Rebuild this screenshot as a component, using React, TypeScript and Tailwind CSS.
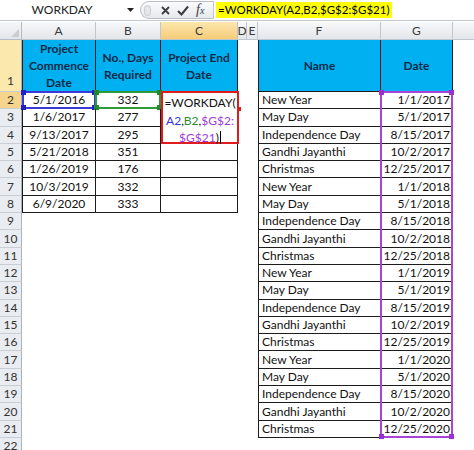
import React from 'react';

const projects = [
  ['5/1/2016', '332'],
  ['1/6/2017', '277'],
  ['9/13/2017', '295'],
  ['5/21/2018', '351'],
  ['1/26/2019', '176'],
  ['10/3/2019', '332'],
  ['6/9/2020', '333'],
];

const names = ['New Year', 'May Day', 'Independence Day', 'Gandhi Jayanthi', 'Christmas'];
const days = ['1/1', '5/1', '8/15', '10/2', '12/25'];
const holidays = [2017, 2018, 2019, 2020].flatMap((y) => names.map((n, i) => [n, `${days[i]}/${y}`]));

const line = 'border-[#1c1c1c]';

// little squares on the corners of a reference range
const Handles = ({ tone }: { tone: string }) => (
  <>
    <span className={`absolute -left-[3px] -top-[3px] h-[5px] w-[5px] ${tone}`} />
    <span className={`absolute -right-[3px] -top-[3px] h-[5px] w-[5px] ${tone}`} />
    <span className={`absolute -bottom-[3px] -left-[3px] h-[5px] w-[5px] ${tone}`} />
    <span className={`absolute -bottom-[3px] -right-[3px] h-[5px] w-[5px] ${tone}`} />
  </>
);

const RowHead = ({ n, tone = 'bg-[#e9ecf0]', bottom = false }: { n: number; tone?: string; bottom?: boolean }) => (
  <div
    className={`flex w-[22px] shrink-0 justify-center border-r border-b border-r-[#aab2bc] border-b-[#c9ced5] text-[12px] text-[#333] ${tone} ${
      bottom ? 'items-end pb-[1px]' : 'items-center'
    }`}
  >
    {n}
  </div>
);

const Hdr = ({ w, children }: { w: string; children: React.ReactNode }) => (
  <div
    className={`flex ${w} shrink-0 items-center justify-center border-r border-b ${line} bg-[#00b0f0] text-center text-[12px] leading-[17px] font-bold text-[#0e2a47]`}
  >
    <div>{children}</div>
  </div>
);

function FormulaBar() {
  return (
    <div className="flex h-[21px] border-b border-[#c3c8ce] bg-white">
      <div className="flex w-[139px] shrink-0 items-center">
        <span className="w-[124px] text-center text-[12px] text-[#222]">WORKDAY</span>
        <svg className="ml-[3px] h-[4px] w-[7px]" viewBox="0 0 7 4">
          <path d="M0 0h7L3.5 4z" fill="#222" />
        </svg>
      </div>
      <div className="mt-[1px] mb-[1px] ml-px flex w-[74px] shrink-0 items-center rounded-l-full border border-r-[#c3c8ce] border-[#b9bec5] bg-gradient-to-b from-[#fafbfc] to-[#e6e9ed]">
        <span className="ml-[3px] h-[11px] w-[7px] rounded-full border border-[#c6cace] bg-[#e4e7ea]" />
        <svg className="ml-[10px] h-[9px] w-[9px]" viewBox="0 0 9 9">
          <path d="M1 1L8 8M8 1L1 8" stroke="#3c3c3c" strokeWidth="1.8" fill="none" />
        </svg>
        <svg className="ml-[7px] h-[11px] w-[12px]" viewBox="0 0 12 11">
          <path d="M1 6L4.5 9.5L11 1.5" stroke="#3c3c3c" strokeWidth="2" fill="none" />
        </svg>
        <span className="ml-[7px] font-['Liberation_Serif',serif] text-[14px] leading-none text-[#3c3c3c] italic">
          f<span className="text-[10px]">x</span>
        </span>
      </div>
      <div className="flex flex-1 items-start">
        <span className="mt-[2px] ml-[2px] h-[16px] bg-[#ffff00] pr-[3px] pl-[2px] text-[11.5px] leading-[16px] whitespace-nowrap text-black">
          =WORKDAY(A2,B2,$G$2:$G$21)
        </span>
      </div>
    </div>
  );
}

function ColumnHeads() {
  const cols = [
    ['A', 'w-[74px]'],
    ['B', 'w-[65px]'],
    ['C', 'w-[77px]'],
    ['D', 'w-[9px]'],
    ['E', 'w-[11px]'],
    ['F', 'w-[123px]'],
    ['G', 'w-[72px]'],
  ];
  return (
    <div className="mt-px flex h-[18px]">
      <div className="relative w-[22px] shrink-0 border-r border-b border-[#b5bcc5] bg-gradient-to-b from-[#f5f6f8] to-[#e3e6ea]">
        <svg className="absolute right-[2px] bottom-[2px] h-[8px] w-[8px]" viewBox="0 0 8 8">
          <path d="M8 0V8H0z" fill="#c9cdd2" />
        </svg>
      </div>
      {cols.map(([c, w]) => (
        <div
          key={c}
          className={`flex ${w} shrink-0 items-center justify-center border-r border-b border-[#c0c6cd] text-[12px] text-[#3a3a3a] ${
            c === 'C'
              ? 'bg-gradient-to-b from-[#fce6ad] to-[#f5cd78]'
              : 'bg-gradient-to-b from-[#f7f8fa] to-[#e3e6ea]'
          }`}
        >
          {c}
        </div>
      ))}
      <div className="flex-1 border-b border-[#c0c6cd] bg-gradient-to-b from-[#f7f8fa] to-[#e3e6ea]" />
    </div>
  );
}

function SheetRow({ n }: { n: number }) {
  const p = projects[n - 2];
  const h = holidays[n - 2];
  return (
    <div className="flex h-[17.3px] shrink-0">
      <RowHead n={n} tone={n === 2 ? 'bg-[#f6d48c]' : 'bg-[#e9ecf0]'} />
      {p ? (
        <>
          <div className={`relative flex w-[74px] shrink-0 items-center justify-center border-l border-r border-b ${line}`}>
            {p[0]}
            {n === 2 && (
              <div className="absolute -inset-px border-2 border-[#3a3ad8]">
                <Handles tone="bg-[#2020c8]" />
              </div>
            )}
          </div>
          <div className={`relative flex w-[65px] shrink-0 items-center justify-center border-r border-b ${line}`}>
            {p[1]}
            {n === 2 && (
              <div className="absolute -inset-px border-2 border-[#2f9a3c]">
                <Handles tone="bg-[#1f8a2c]" />
              </div>
            )}
          </div>
          <div className={`relative w-[77px] shrink-0 border-r border-b ${line}`}>
            {n === 2 && (
              <div className="absolute -top-px left-0 z-20 flex h-[53px] w-[78px] flex-col items-center border-2 border-[#e01b1b] bg-white pt-[1px] leading-[17.5px]">
                <span>=WORKDAY(</span>
                <span>
                  <span className="text-[#3535d8]">A2</span>,<span className="text-[#2b8f2b]">B2</span>,
                  <span className="text-[#a03cd4]">$G$2:</span>
                </span>
                <span className="flex items-center">
                  <span className="text-[#a03cd4]">$G$21</span>)
                  <span className="ml-[1px] h-[13px] w-px bg-black" />
                </span>
                <span className="absolute top-[14px] -right-[4px] h-[4px] w-[3px] bg-[#e01b1b]" />
              </div>
            )}
          </div>
        </>
      ) : (
        <>
          <div className="w-[74px] shrink-0" />
          <div className="w-[65px] shrink-0" />
          <div className="w-[77px] shrink-0" />
        </>
      )}
      <div className="w-[9px] shrink-0" />
      <div className="w-[11px] shrink-0" />
      {h ? (
        <>
          <div className={`flex w-[123px] shrink-0 items-center border-l border-r border-b ${line} pl-[3px]`}>{h[0]}</div>
          <div className={`relative flex w-[72px] shrink-0 items-center justify-end border-r border-b ${line} pr-[2px]`}>
            {h[1]}
            {n === 2 && (
              <div className="pointer-events-none absolute -top-px -left-px z-10 h-[347px] w-[73px] border-2 border-[#a645d6]">
                <Handles tone="bg-[#9a30d0]" />
              </div>
            )}
          </div>
        </>
      ) : (
        <>
          <div className="w-[123px] shrink-0" />
          <div className="w-[72px] shrink-0" />
        </>
      )}
      <div className="flex-1" />
    </div>
  );
}

export default function App() {
  const rows = Array.from({ length: 21 }, (_, i) => i + 2);
  return (
    <div className="h-[450px] w-[474px] overflow-hidden bg-white font-['Lato','Liberation_Sans',sans-serif] text-[12px] text-[#111]">
      <FormulaBar />
      <ColumnHeads />
      <div className="flex h-[52px]">
        <RowHead n={1} tone="bg-[#fbe8ad]" bottom />
        <Hdr w="w-[74px] border-l">
          Project
          <br />
          Commence
          <br />
          Date
        </Hdr>
        <Hdr w="w-[65px]">
          No., Days
          <br />
          Required
        </Hdr>
        <Hdr w="w-[77px]">
          Project End
          <br />
          Date
        </Hdr>
        <div className="w-[9px] shrink-0" />
        <div className="w-[11px] shrink-0" />
        <Hdr w="w-[123px] border-l">Name</Hdr>
        <Hdr w="w-[72px]">Date</Hdr>
        <div className="flex-1" />
      </div>
      {rows.map((n) => (
        <SheetRow key={n} n={n} />
      ))}
    </div>
  );
}
